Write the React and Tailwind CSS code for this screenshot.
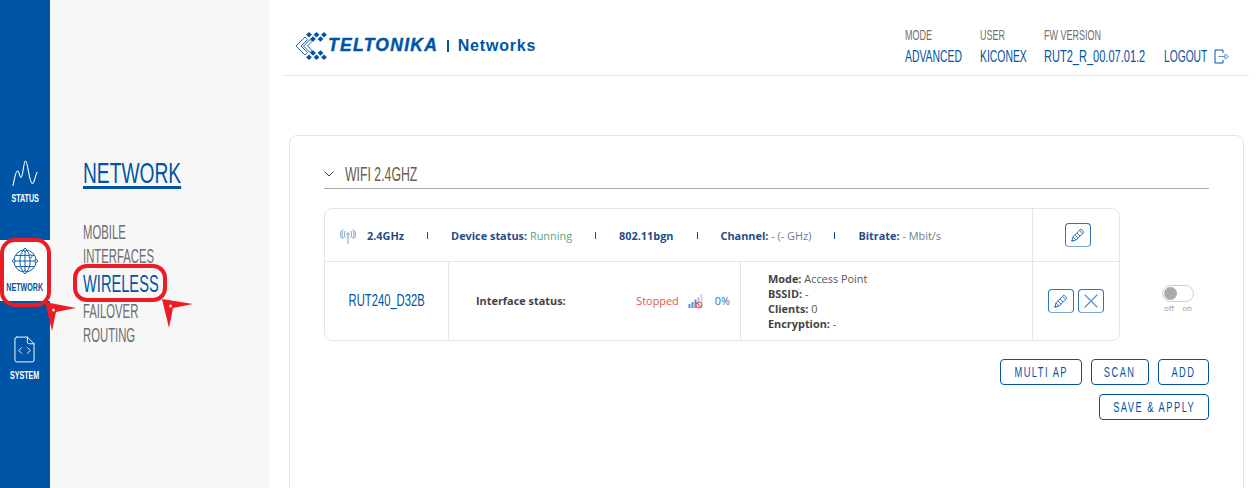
const SANS = "font-['Liberation_Sans',sans-serif]";
const OPEN = "font-['Open_Sans',sans-serif]";
const BLUE = "text-[#0054a6]";

// no Oswald here, so the headline face is squeezed sideways
const Cond = ({ className = "", children }) => (
  <span className={`inline-block whitespace-nowrap ${className}`}>{children}</span>
);

const StatusIcon = () => (
  <svg width="26" height="26" viewBox="0 0 26 26" fill="none" stroke="currentColor" strokeWidth="1.1" strokeLinecap="round" strokeLinejoin="round">
    <path d="M1 25.500C2.500 19 3.500 11 5.500 11C7.500 11 7.500 17.500 9 17.500C11 17.500 11.500 1 13.500 1C16 1 17 23.500 20.500 23.500C22.500 23.500 23 16 25 12.500" />
  </svg>
);

const GlobeIcon = () => (
  <svg width="26" height="26" viewBox="0 0 28 28" fill="none" stroke="#0054a6" strokeWidth="1">
    <circle cx="14" cy="14" r="12" />
    <ellipse cx="14" cy="14" rx="5.500" ry="12" />
    <path d="M14 2v24M2 14h24M4 8h20M4 20h20" />
    <circle cx="14" cy="2" r="1.500" fill="white" />
    <circle cx="14" cy="26" r="1.500" fill="white" />
    <circle cx="2" cy="14" r="1.500" fill="white" />
    <circle cx="26" cy="14" r="1.500" fill="white" />
    <circle cx="20" cy="9" r="1.500" fill="white" />
  </svg>
);

const SystemIcon = () => (
  <svg width="21" height="27" viewBox="0 0 22 28" fill="none" stroke="currentColor" strokeWidth="1" strokeLinecap="round" strokeLinejoin="round">
    <path d="M3 1h11l7 7v17a2 2 0 0 1-2 2H3a2 2 0 0 1-2-2V3a2 2 0 0 1 2-2z" />
    <path d="M14 1v5a2 2 0 0 0 2 2h5" />
    <path d="M8 12l-3 3 3 3M14 12l3 3-3 3" />
  </svg>
);

const LOGO_DIAMONDS = [[14, 2.800], [21.500, 2.800], [29, 2.800], [18, 7], [25.500, 7]];

const LogoMark = () => (
  <svg width="34" height="28" viewBox="0 0 34 28" fill="#0054a6">
    {LOGO_DIAMONDS.map(([x, y]) => (
      <g key={`${x}-${y}`}>
        <path d={`M${x - 2.900} ${y}L${x} ${y - 2.800}L${x + 2.900} ${y}L${x} ${y + 2.800}z`} />
        <path d={`M${x - 2.900} ${28 - y}L${x} ${28 - y - 2.800}L${x + 2.900} ${28 - y}L${x} ${28 - y + 2.800}z`} />
      </g>
    ))}
    <path d="M10 5L1 14L10 23L12.500 20.500L6 14L12.500 7.500z" fill="none" stroke="#0054a6" strokeWidth="0.900" />
    <path d="M15 7.500L8.500 14L15 20.500L17 18.500L12.500 14L17 9.500z" fill="none" stroke="#0054a6" strokeWidth="0.900" />
  </svg>
);

const LogoutIcon = () => (
  <svg width="15" height="15" viewBox="0 0 15 15" fill="none" stroke="#0054a6" strokeWidth="1">
    <path d="M9 4V1H1v13h8v-3" />
    <path d="M4.500 7.500h6.500V5l3.500 2.500L11 10V7.500" stroke="#5b8fc7" />
  </svg>
);

const AntennaIcon = () => (
  <svg width="16" height="16" viewBox="0 0 16 16" fill="none" stroke="#7fa5d0" strokeWidth="1">
    <circle cx="8" cy="6" r="1.200" />
    <path d="M8 7v9M5.200 3c-1 2-1 4.500 0 6.500M10.800 3c1 2 1 4.500 0 6.500M3.200 1.500c-1.600 3-1.600 6.500 0 9.500M12.800 1.500c1.600 3 1.600 6.500 0 9.500M1.300 2.500c-1 2-1 5.500 0 7.500M14.700 2.500c1 2 1 5.500 0 7.500" />
  </svg>
);

const SignalIcon = () => (
  <svg width="16" height="16" viewBox="0 0 16 16">
    <rect x="0.500" y="11" width="2" height="4" fill="#5b8fc7" />
    <rect x="3.500" y="9" width="2" height="6" fill="#5b8fc7" />
    <rect x="6.500" y="6.500" width="2" height="8.500" fill="#5b8fc7" />
    <rect x="9.500" y="4" width="2" height="11" fill="#b9c9dd" />
    <rect x="12.500" y="1" width="2" height="14" fill="#c9d5e4" />
    <circle cx="11" cy="12" r="3" fill="none" stroke="#e2574c" strokeWidth="1" />
    <path d="M9 10l4 4" stroke="#e2574c" strokeWidth="1" />
  </svg>
);

const PencilIcon = () => (
  <svg width="16" height="16" viewBox="0 0 16 16" fill="none" stroke="#2f73b8" strokeWidth="1" strokeLinejoin="round">
    <path d="M1.800 14.200L3 9.800L10.800 2L14 5.200L6.200 13z" />
    <path d="M3 9.800L6.200 13M5 8L8 11M7 6L10 9M9.500 3.300L12.700 6.500" />
    <path d="M1.800 14.200L3 13" strokeWidth="1.500" />
  </svg>
);

const CrossIcon = () => (
  <svg width="16" height="16" viewBox="0 0 16 16" fill="none" stroke="#5b8fc7" strokeWidth="1.200" strokeLinecap="round">
    <path d="M2 2l12 12M14 2L2 14" />
  </svg>
);

const Tick = () => <span className="h-[7px] w-px bg-[#0054a6]" />;

const Field = ({ label, value, tone = "text-[#6b7c8f]" }) => (
  <span>
    <b className="font-bold text-[#1f4e87]">{label}</b> <span className={tone}>{value}</span>
  </span>
);

const Info = ({ label, value }) => (
  <div>
    <b className="font-bold text-[#444]">{label}</b> <span className="text-[#555]">{value}</span>
  </div>
);

const IconButton = ({ children }) => (
  <button type="button" className="flex h-[24px] w-[26px] items-center justify-center rounded-[4px] border border-[#2f73b8] border-b-[#7fa5d0]">
    {children}
  </button>
);

const ActionButton = ({ children, width }) => (
  <button type="button" className={`flex h-[26px] ${width} items-center justify-center rounded-[4px] border border-[#0054a6] text-[15px] tracking-[2.400px] ${BLUE}`}>
    <Cond className="scale-x-[.62]">{children}</Cond>
  </button>
);

const Meta = ({ label, value, width, squeeze = "scale-x-[.65]" }) => (
  <div className={width}>
    <div className="origin-left scale-x-[.62] whitespace-nowrap text-[14.500px] leading-[20px] text-[#77706a]">{label}</div>
    <div className={`mt-[2px] origin-left ${squeeze} whitespace-nowrap text-[16px] leading-[20px] ${BLUE}`}>{value}</div>
  </div>
);

const MENU = ["MOBILE", "INTERFACES"];
const MENU_AFTER = ["FAILOVER", "ROUTING"];

export default function App() {
  return (
    <div className={`relative flex h-screen overflow-hidden bg-white ${SANS}`}>
      <aside className="flex w-[50px] shrink-0 flex-col items-center gap-[28px] overflow-hidden bg-[#0054a6] pt-[152px] text-white">
        <div className="flex h-[60px] flex-col items-center gap-[5px] pt-[8px]">
          <StatusIcon />
          <Cond className="scale-x-[.62] text-[11.500px] font-bold leading-[14px]">STATUS</Cond>
        </div>
        <div className="flex h-[61px] w-full flex-col items-center gap-[6px] bg-white pt-[8px] text-[#0054a6]">
          <GlobeIcon />
          <Cond className="scale-x-[.62] text-[11.500px] font-bold leading-[14px]">NETWORK</Cond>
        </div>
        <div className="flex h-[60px] flex-col items-center gap-[5px] pt-[7px]">
          <SystemIcon />
          <Cond className="scale-x-[.62] text-[11.500px] font-bold leading-[14px]">SYSTEM</Cond>
        </div>
      </aside>

      <nav className="w-[220px] shrink-0 bg-[#f7f7f7] pl-[33px] pt-[155px]">
        <h1 className={`origin-left scale-x-[.64] whitespace-nowrap text-[30px] leading-[36px] underline underline-offset-[3px] ${BLUE}`}>NETWORK</h1>
        <ul className="mt-[29px] origin-left text-[19.500px] leading-[24px] text-[#6f6f6f]">
          {MENU.map(item => <li key={item} className="origin-left scale-x-[.58] whitespace-nowrap">{item}</li>)}
          <li className={`origin-left scale-x-[.61] whitespace-nowrap pb-px pt-[2px] text-[24px] leading-[28px] ${BLUE}`}>WIRELESS</li>
          {MENU_AFTER.map(item => <li key={item} className="origin-left scale-x-[.58] whitespace-nowrap">{item}</li>)}
        </ul>
      </nav>

      <main className="min-w-0 flex-1 pl-[13px] pr-[11px]">
        <header className="flex h-[76px] items-center justify-between border-b border-[#e3e3e3] pl-[12px] pr-[20px] pt-[16px]">
          <div className="flex items-center font-bold text-[#0054a6]">
            <LogoMark />
            <span className="-ml-[1px] text-[17.500px] italic leading-none tracking-[1.300px] [-webkit-text-stroke:0.4px_#0054a6]">TELTONIKA</span>
            <span className="ml-[9px] h-[12px] w-[1.500px] bg-[#0054a6]" />
            <span className="ml-[9px] text-[16px] leading-none tracking-[0.800px]">Networks</span>
          </div>
          <div className="flex items-end pl-px">
            <Meta label="MODE" value="ADVANCED" width="w-[75px]" />
            <Meta label="USER" value="KICONEX" width="w-[64px]" />
            <Meta label="FW VERSION" value="RUT2_R_00.07.01.2" width="w-[120px]" squeeze="scale-x-[.69]" />
            <div className="flex items-center gap-[8px]">
              <span className={`w-[42px] origin-left scale-x-[.64] whitespace-nowrap text-[16px] leading-[20px] ${BLUE}`}>LOGOUT</span>
              <LogoutIcon />
            </div>
          </div>
        </header>

        <section className="ml-[6px] mr-[5px] mt-[59px] h-[400px] rounded-[8px] border border-[#e6e6e6] px-[34px] pt-[25px]">
          <div className="flex h-[28px] items-center gap-[11px] border-b border-[#aaa] pb-[2px]">
            <svg width="10" height="6" viewBox="0 0 10 6" fill="none" stroke="#444" strokeWidth="1"><path d="M0.500 0.500L5 5l4.500-4.500" /></svg>
            <h2 className="origin-left scale-x-[.63] whitespace-nowrap text-[19.500px] leading-[24px] text-[#6a5a4e]">WIFI 2.4GHZ</h2>
          </div>

          <div className="mt-[19px] flex items-start">
            <div className={`w-[796px] shrink-0 rounded-[8px] border border-[#e6e6e6] ${OPEN} text-[10.900px]`}>
              <div className="flex h-[53px] items-center border-b border-[#e6e6e6]">
                <div className="flex flex-1 items-center gap-[23px] pl-[15px] pt-[2px]">
                  <span className="flex items-center gap-[11px]">
                    <AntennaIcon />
                    <b className="font-bold text-[#1f4e87]">2.4GHz</b>
                  </span>
                  <Tick />
                  <Field label="Device status:" value="Running" tone="text-[#5f9f80]" />
                  <Tick />
                  <b className="font-bold text-[#1f4e87]">802.11bgn</b>
                  <Tick />
                  <Field label="Channel:" value="- (- GHz)" />
                  <Tick />
                  <Field label="Bitrate:" value="- Mbit/s" />
                </div>
                <div className="flex h-full w-[87px] items-center justify-center border-l border-[#e6e6e6] pl-[3px]">
                  <IconButton><PencilIcon /></IconButton>
                </div>
              </div>
              <div className="flex h-[78px] items-stretch">
                <div className={`flex w-[124px] items-center justify-center border-r border-[#e6e6e6] ${SANS} text-[17px] ${BLUE}`}>
                  <Cond className="scale-x-[.66]">RUT240_D32B</Cond>
                </div>
                <div className="flex w-[292px] items-center border-r border-[#e6e6e6] pl-[27px] pr-[10px]">
                  <b className="font-bold text-[#444]">Interface status:</b>
                  <span className="ml-auto text-[#dd5a45]">Stopped</span>
                  <span className="ml-[9px]"><SignalIcon /></span>
                  <span className="ml-[11px] text-[#3a6ea8]">0%</span>
                </div>
                <div className="flex w-[292px] flex-col justify-center border-r border-[#e6e6e6] pl-[27px] leading-[15px]">
                  <Info label="Mode:" value="Access Point" />
                  <Info label="BSSID:" value="-" />
                  <Info label="Clients:" value="0" />
                  <Info label="Encryption:" value="-" />
                </div>
                <div className="flex flex-1 items-center justify-center gap-[4px]">
                  <IconButton><PencilIcon /></IconButton>
                  <IconButton><CrossIcon /></IconButton>
                </div>
              </div>
            </div>
            <div className={`ml-[42px] mt-[77px] flex flex-col items-center ${OPEN}`}>
              <div className="flex h-[17px] w-[32px] items-center rounded-full border border-[#ccc] px-px">
                <span className="size-[13px] rounded-full bg-[#aaa]" />
              </div>
              <div className="flex gap-[8px] text-[8px] leading-[11px] text-[#999]">
                <span>off</span>
                <span>on</span>
              </div>
            </div>
          </div>

          <div className="mt-[18px] flex justify-end gap-[9px]">
            <ActionButton width="w-[82px]">MULTI AP</ActionButton>
            <ActionButton width="w-[58px]">SCAN</ActionButton>
            <ActionButton width="w-[51px]">ADD</ActionButton>
          </div>
          <div className="mt-[9px] flex justify-end">
            <ActionButton width="w-[110px]">SAVE &amp; APPLY</ActionButton>
          </div>
        </section>
      </main>

      {/* red annotations drawn over the screenshot */}
      <span className="absolute left-0 top-[238px] h-[69px] w-[51px] rounded-[15px] border-[4px] border-[#ed1c24]" />
      <span className="absolute left-[73px] top-[264px] h-[38px] w-[94px] rounded-[14px] border-[4px] border-[#ed1c24]" />
      <svg className="absolute left-[44px] top-[298px]" width="34" height="36" viewBox="0 0 34 36">
        <path d="M1 4L32 10L12 14L8 33z" fill="#ed1c24" />
        <circle cx="9.500" cy="12" r="1.500" fill="#ffd6d6" />
      </svg>
      <svg className="absolute left-[161px] top-[296px]" width="34" height="36" viewBox="0 0 34 36">
        <path d="M1 3L32 8L12 12L8 32z" fill="#ed1c24" />
        <circle cx="9.500" cy="10" r="1.500" fill="#ffd6d6" />
      </svg>
    </div>
  );
}
